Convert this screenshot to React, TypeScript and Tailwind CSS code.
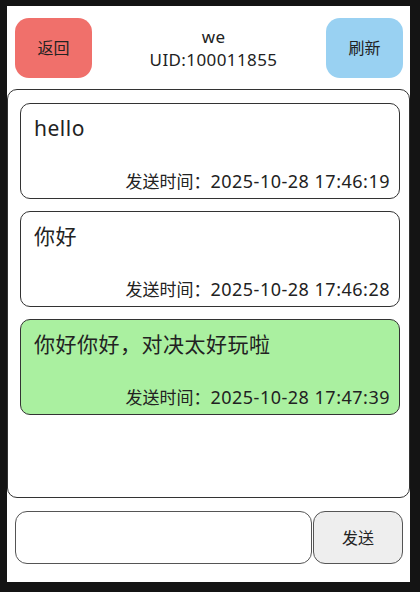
const messages = [
  { id: 1, text: "hello", time: "2025-10-28 17:46:19", mine: false },
  { id: 2, text: "你好", time: "2025-10-28 17:46:28", mine: false },
  { id: 3, text: "你好你好，对决太好玩啦", time: "2025-10-28 17:47:39", mine: true },
];

const font = {
  fontFamily: '"Noto Sans", "Noto Sans CJK SC", sans-serif',
};

export default function App() {
  return (
    <div
      className="h-[592px] w-[420px] bg-[#141414] pb-[10px] pl-[7px] pr-[10px] pt-[6px]"
      style={font}
    >
      <div className="flex h-full w-full flex-col bg-white text-[#222]">
        <header className="flex items-center justify-between pl-[8px] pr-[7px] pt-[12px]">
          <button className="flex h-[60px] w-[77px] items-center justify-center rounded-[14px] bg-[#f0706b] text-[16px]">
            返回
          </button>
          <div className="ml-[9px] flex flex-col items-center text-[17px] leading-[23px] tracking-[0.4px]">
            <span>we</span>
            <span>UID:100011855</span>
          </div>
          <button className="flex h-[60px] w-[77px] items-center justify-center rounded-[14px] bg-[#99d1f2] text-[16px]">
            刷新
          </button>
        </header>

        <section className="mt-[11px] flex h-[409px] flex-col gap-[12px] rounded-[10px] border border-[#333] pl-[12px] pr-[9px] pt-[13px]">
          {messages.map((m) => (
            <div
              key={m.id}
              className={`flex h-[96px] flex-col justify-between rounded-[10px] border border-[#333] pb-[5px] pl-[13px] pr-[9px] pt-[10px] ${
                m.mine ? "bg-[#aaf0a0]" : "bg-white"
              }`}
            >
              <p className="text-[21px] leading-[28px] tracking-[0.5px]">{m.text}</p>
              <p className="text-right text-[17px] leading-[22px]">
                发送时间：
                <span className="text-[18px] tracking-[0.5px]">{m.time}</span>
              </p>
            </div>
          ))}
        </section>

        <footer className="mt-[13px] flex pl-[8px] pr-[7px]">
          <input
            className="h-[53px] w-[297px] rounded-[12px] border border-[#555] bg-white px-3 text-[16px] outline-none"
            style={font}
          />
          <button className="ml-[1px] flex h-[53px] flex-1 items-center justify-center rounded-[12px] border border-[#555] bg-[#eeeeee] text-[16px]">
            发送
          </button>
        </footer>
      </div>
    </div>
  );
}
